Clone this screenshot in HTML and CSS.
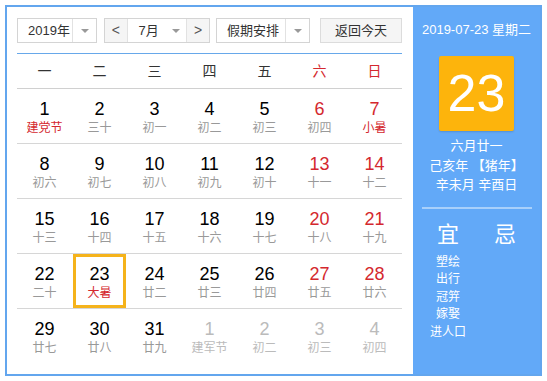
FILE: index.html
```html
<!DOCTYPE html>
<html lang="zh-CN">
<head>
<meta charset="utf-8">
<link rel="stylesheet" href="styles.css">
</head>
<body>
<div class="cal">
  <div class="main">
    <div class="bar">
      <div class="sel year"><span class="val">2019年</span><span class="arr"><i class="tri"></i></span></div>
      <div class="month-group">
        <span class="nav">&lt;</span>
        <div class="sel month"><span class="val">7月</span><span class="arr"><i class="tri"></i></span></div>
        <span class="nav">&gt;</span>
      </div>
      <div class="sel holiday"><span class="val">假期安排</span><span class="arr"><i class="tri"></i></span></div>
      <div class="today-btn">返回今天</div>
    </div>
    <div class="week">
      <span>一</span><span>二</span><span>三</span><span>四</span><span>五</span><span class="red">六</span><span class="red">日</span>
    </div>
    <div class="days">
      <div class="row">
        <div class="cell"><b>1</b><em class="red">建党节</em></div>
        <div class="cell"><b>2</b><em>三十</em></div>
        <div class="cell"><b>3</b><em>初一</em></div>
        <div class="cell"><b>4</b><em>初二</em></div>
        <div class="cell"><b>5</b><em>初三</em></div>
        <div class="cell wk"><b>6</b><em>初四</em></div>
        <div class="cell wk"><b>7</b><em class="red">小暑</em></div>
      </div>
      <div class="row">
        <div class="cell"><b>8</b><em>初六</em></div>
        <div class="cell"><b>9</b><em>初七</em></div>
        <div class="cell"><b>10</b><em>初八</em></div>
        <div class="cell"><b>11</b><em>初九</em></div>
        <div class="cell"><b>12</b><em>初十</em></div>
        <div class="cell wk"><b>13</b><em>十一</em></div>
        <div class="cell wk"><b>14</b><em>十二</em></div>
      </div>
      <div class="row">
        <div class="cell"><b>15</b><em>十三</em></div>
        <div class="cell"><b>16</b><em>十四</em></div>
        <div class="cell"><b>17</b><em>十五</em></div>
        <div class="cell"><b>18</b><em>十六</em></div>
        <div class="cell"><b>19</b><em>十七</em></div>
        <div class="cell wk"><b>20</b><em>十八</em></div>
        <div class="cell wk"><b>21</b><em>十九</em></div>
      </div>
      <div class="row">
        <div class="cell"><b>22</b><em>二十</em></div>
        <div class="cell today"><b>23</b><em class="red">大暑</em></div>
        <div class="cell"><b>24</b><em>廿二</em></div>
        <div class="cell"><b>25</b><em>廿三</em></div>
        <div class="cell"><b>26</b><em>廿四</em></div>
        <div class="cell wk"><b>27</b><em>廿五</em></div>
        <div class="cell wk"><b>28</b><em>廿六</em></div>
      </div>
      <div class="row last">
        <div class="cell"><b>29</b><em>廿七</em></div>
        <div class="cell"><b>30</b><em>廿八</em></div>
        <div class="cell"><b>31</b><em>廿九</em></div>
        <div class="cell other"><b>1</b><em>建军节</em></div>
        <div class="cell other"><b>2</b><em>初二</em></div>
        <div class="cell other"><b>3</b><em>初三</em></div>
        <div class="cell other"><b>4</b><em>初四</em></div>
      </div>
    </div>
  </div>
  <div class="side">
    <div class="date">2019-07-23 星期二</div>
    <div class="big">23</div>
    <div class="lunar">
      <div>六月廿一</div>
      <div>己亥年 【猪年】</div>
      <div>辛未月 辛酉日</div>
    </div>
    <div class="divider"></div>
    <div class="yiji">
      <div class="col">
        <div class="head">宜</div>
        <div class="item">塑绘</div>
        <div class="item">出行</div>
        <div class="item">冠笄</div>
        <div class="item">嫁娶</div>
        <div class="item">进人口</div>
      </div>
      <div class="col">
        <div class="head">忌</div>
      </div>
    </div>
  </div>
</div>
</body>
</html>
```

FILE: styles.css
```css
* { box-sizing: border-box; }
body {
  margin: 0;
  background: #fff;
  font-family: "Liberation Sans", "Noto Sans CJK SC", sans-serif;
  color: #000;
}
.cal {
  display: flex;
  margin: 5px;
  width: 537px;
  height: 371px;
  border: 2px solid #63a6ee;
}
.main {
  width: 406px;
  padding: 11px 0 0 10px;
}
.bar {
  display: flex;
  height: 25px;
  width: 385px;
  font-size: 13px;
  color: #333;
}
.sel {
  display: flex;
  border: 1px solid #d4d4d4;
  background: #fff;
  height: 25px;
}
.sel .val {
  flex: 1;
  line-height: 23px;
  padding-left: 10px;
}
.sel .arr {
  width: 24px;
  border-left: 1px solid #e2e2e2;
  display: flex;
  align-items: center;
  justify-content: center;
}
.tri {
  width: 0;
  height: 0;
  border-left: 4px solid transparent;
  border-right: 4px solid transparent;
  border-top: 4px solid #999;
}
.year { width: 80px; }
.month-group {
  display: flex;
  margin-left: 7px;
  width: 106px;
  border: 1px solid #d4d4d4;
  height: 25px;
}
.month-group .nav {
  width: 22px;
  text-align: center;
  line-height: 22px;
  font-size: 14px;
  color: #555;
  background: #f5f5f5;
}
.month-group .month {
  border: none;
  border-left: 1px solid #e2e2e2;
  border-right: 1px solid #e2e2e2;
  height: 23px;
  width: 62px;
}
.month .val { padding-left: 11px; }
.month .arr { border-left: none; width: 20px; }
.holiday { width: 94px; margin-left: 6px; }
.holiday .val { padding-left: 10px; }
.today-btn {
  margin-left: auto;
  width: 82px;
  height: 25px;
  border: 1px solid #dcdcdc;
  background: #f5f5f5;
  text-align: center;
  line-height: 23px;
  font-size: 13px;
  color: #333;
}
.week {
  display: grid;
  grid-template-columns: repeat(7, 55px);
  margin-top: 10px;
  width: 385px;
  height: 36px;
  border-top: 1px solid #67a8ea;
  border-bottom: 1px solid #d0d0d0;
  font-size: 14px;
  color: #333;
  text-align: center;
  line-height: 34px;
}
.red { color: #d4282e; }
.days { width: 385px; }
.row {
  display: grid;
  grid-template-columns: repeat(7, 55px);
  height: 55px;
  border-bottom: 1px solid #d6d6d6;
}
.row.last { border-bottom: none; }
.cell {
  display: flex;
  flex-direction: column;
  align-items: center;
  padding-top: 10px;
  height: 54px;
}
.cell b {
  font-weight: normal;
  font-size: 18px;
  line-height: 20px;
  color: #000;
}
.cell em {
  font-style: normal;
  font-size: 12px;
  line-height: 16px;
  color: #999;
  margin-top: 1px;
}
.cell em.red { color: #d4282e; }
.cell.wk b { color: #d4282e; }
.cell.other b, .cell.other em { color: #bbb; }
.cell.today {
  border: 3px solid #f5b31b;
  margin: 0 1px;
  padding-top: 7px;
}
.side {
  flex: 1;
  background: #62a9f8;
  color: #fff;
  display: flex;
  flex-direction: column;
  align-items: center;
  padding-top: 15px;
}
.date {
  font-size: 13px;
  line-height: 16px;
}
.big {
  margin-top: 18px;
  width: 75px;
  height: 75px;
  background: #fdb40c;
  border-radius: 2px;
  box-shadow: 0 1px 2px rgba(0,0,0,0.15);
  font-size: 52px;
  line-height: 75px;
  text-align: center;
}
.lunar {
  margin-top: 5px;
  font-size: 13px;
  line-height: 19.5px;
  text-align: center;
}
.divider {
  margin-top: 12px;
  width: 110px;
  height: 2px;
  background: rgba(255,255,255,0.45);
}
.yiji {
  display: flex;
  justify-content: center;
  margin-top: 14px;
}
.col {
  width: 57px;
  display: flex;
  flex-direction: column;
  align-items: center;
}
.head {
  font-size: 22px;
  line-height: 24px;
  margin-bottom: 7px;
}
.item {
  font-size: 12px;
  line-height: 17.5px;
}
```
